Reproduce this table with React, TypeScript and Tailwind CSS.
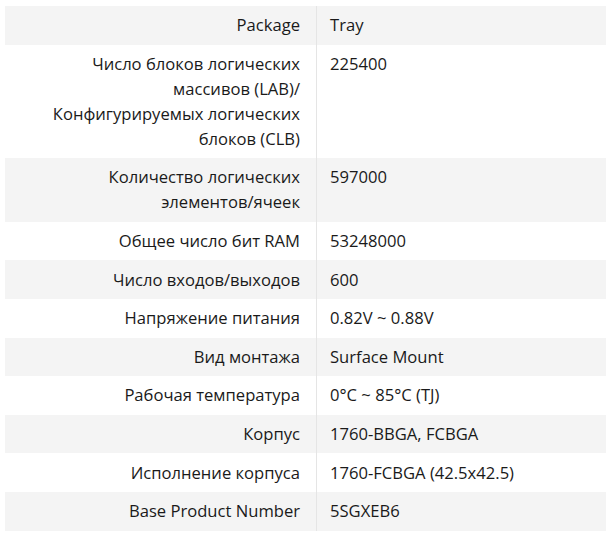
const rows: [string, string][] = [
  ['Package', 'Tray'],
  ['Число блоков логических массивов (LAB)/ Конфигурируемых логических блоков (CLB)', '225400'],
  ['Количество логических элементов/ячеек', '597000'],
  ['Общее число бит RAM', '53248000'],
  ['Число входов/выходов', '600'],
  ['Напряжение питания', '0.82V ~ 0.88V'],
  ['Вид монтажа', 'Surface Mount'],
  ['Рабочая температура', '0°C ~ 85°C (TJ)'],
  ['Корпус', '1760-BBGA, FCBGA'],
  ['Исполнение корпуса', '1760-FCBGA (42.5x42.5)'],
  ['Base Product Number', '5SGXEB6'],
];

export default function App() {
  return (
    <div className="min-h-screen bg-white pt-[6px] pl-[5px] font-['Open_Sans',sans-serif] text-[16.6px] leading-[25px] text-[#1a1a1a]">
      <div className="grid grid-cols-[312px_1fr]">
        {rows.map(([label, value], i) => (
          <div key={label} className="contents">
            <div
              className={`border-r border-[#e5e5e5] pt-[6.3px] pb-[7.3px] pl-[30px] pr-[16px] text-right ${
                i % 2 === 0 ? 'bg-[#f4f4f4]' : 'bg-white'
              }`}
            >
              {label}
            </div>
            <div className={`pt-[6.3px] pb-[7.3px] pl-[13px] pr-4 ${i % 2 === 0 ? 'bg-[#f4f4f4]' : 'bg-white'}`}>
              {value}
            </div>
          </div>
        ))}
      </div>
    </div>
  );
}
